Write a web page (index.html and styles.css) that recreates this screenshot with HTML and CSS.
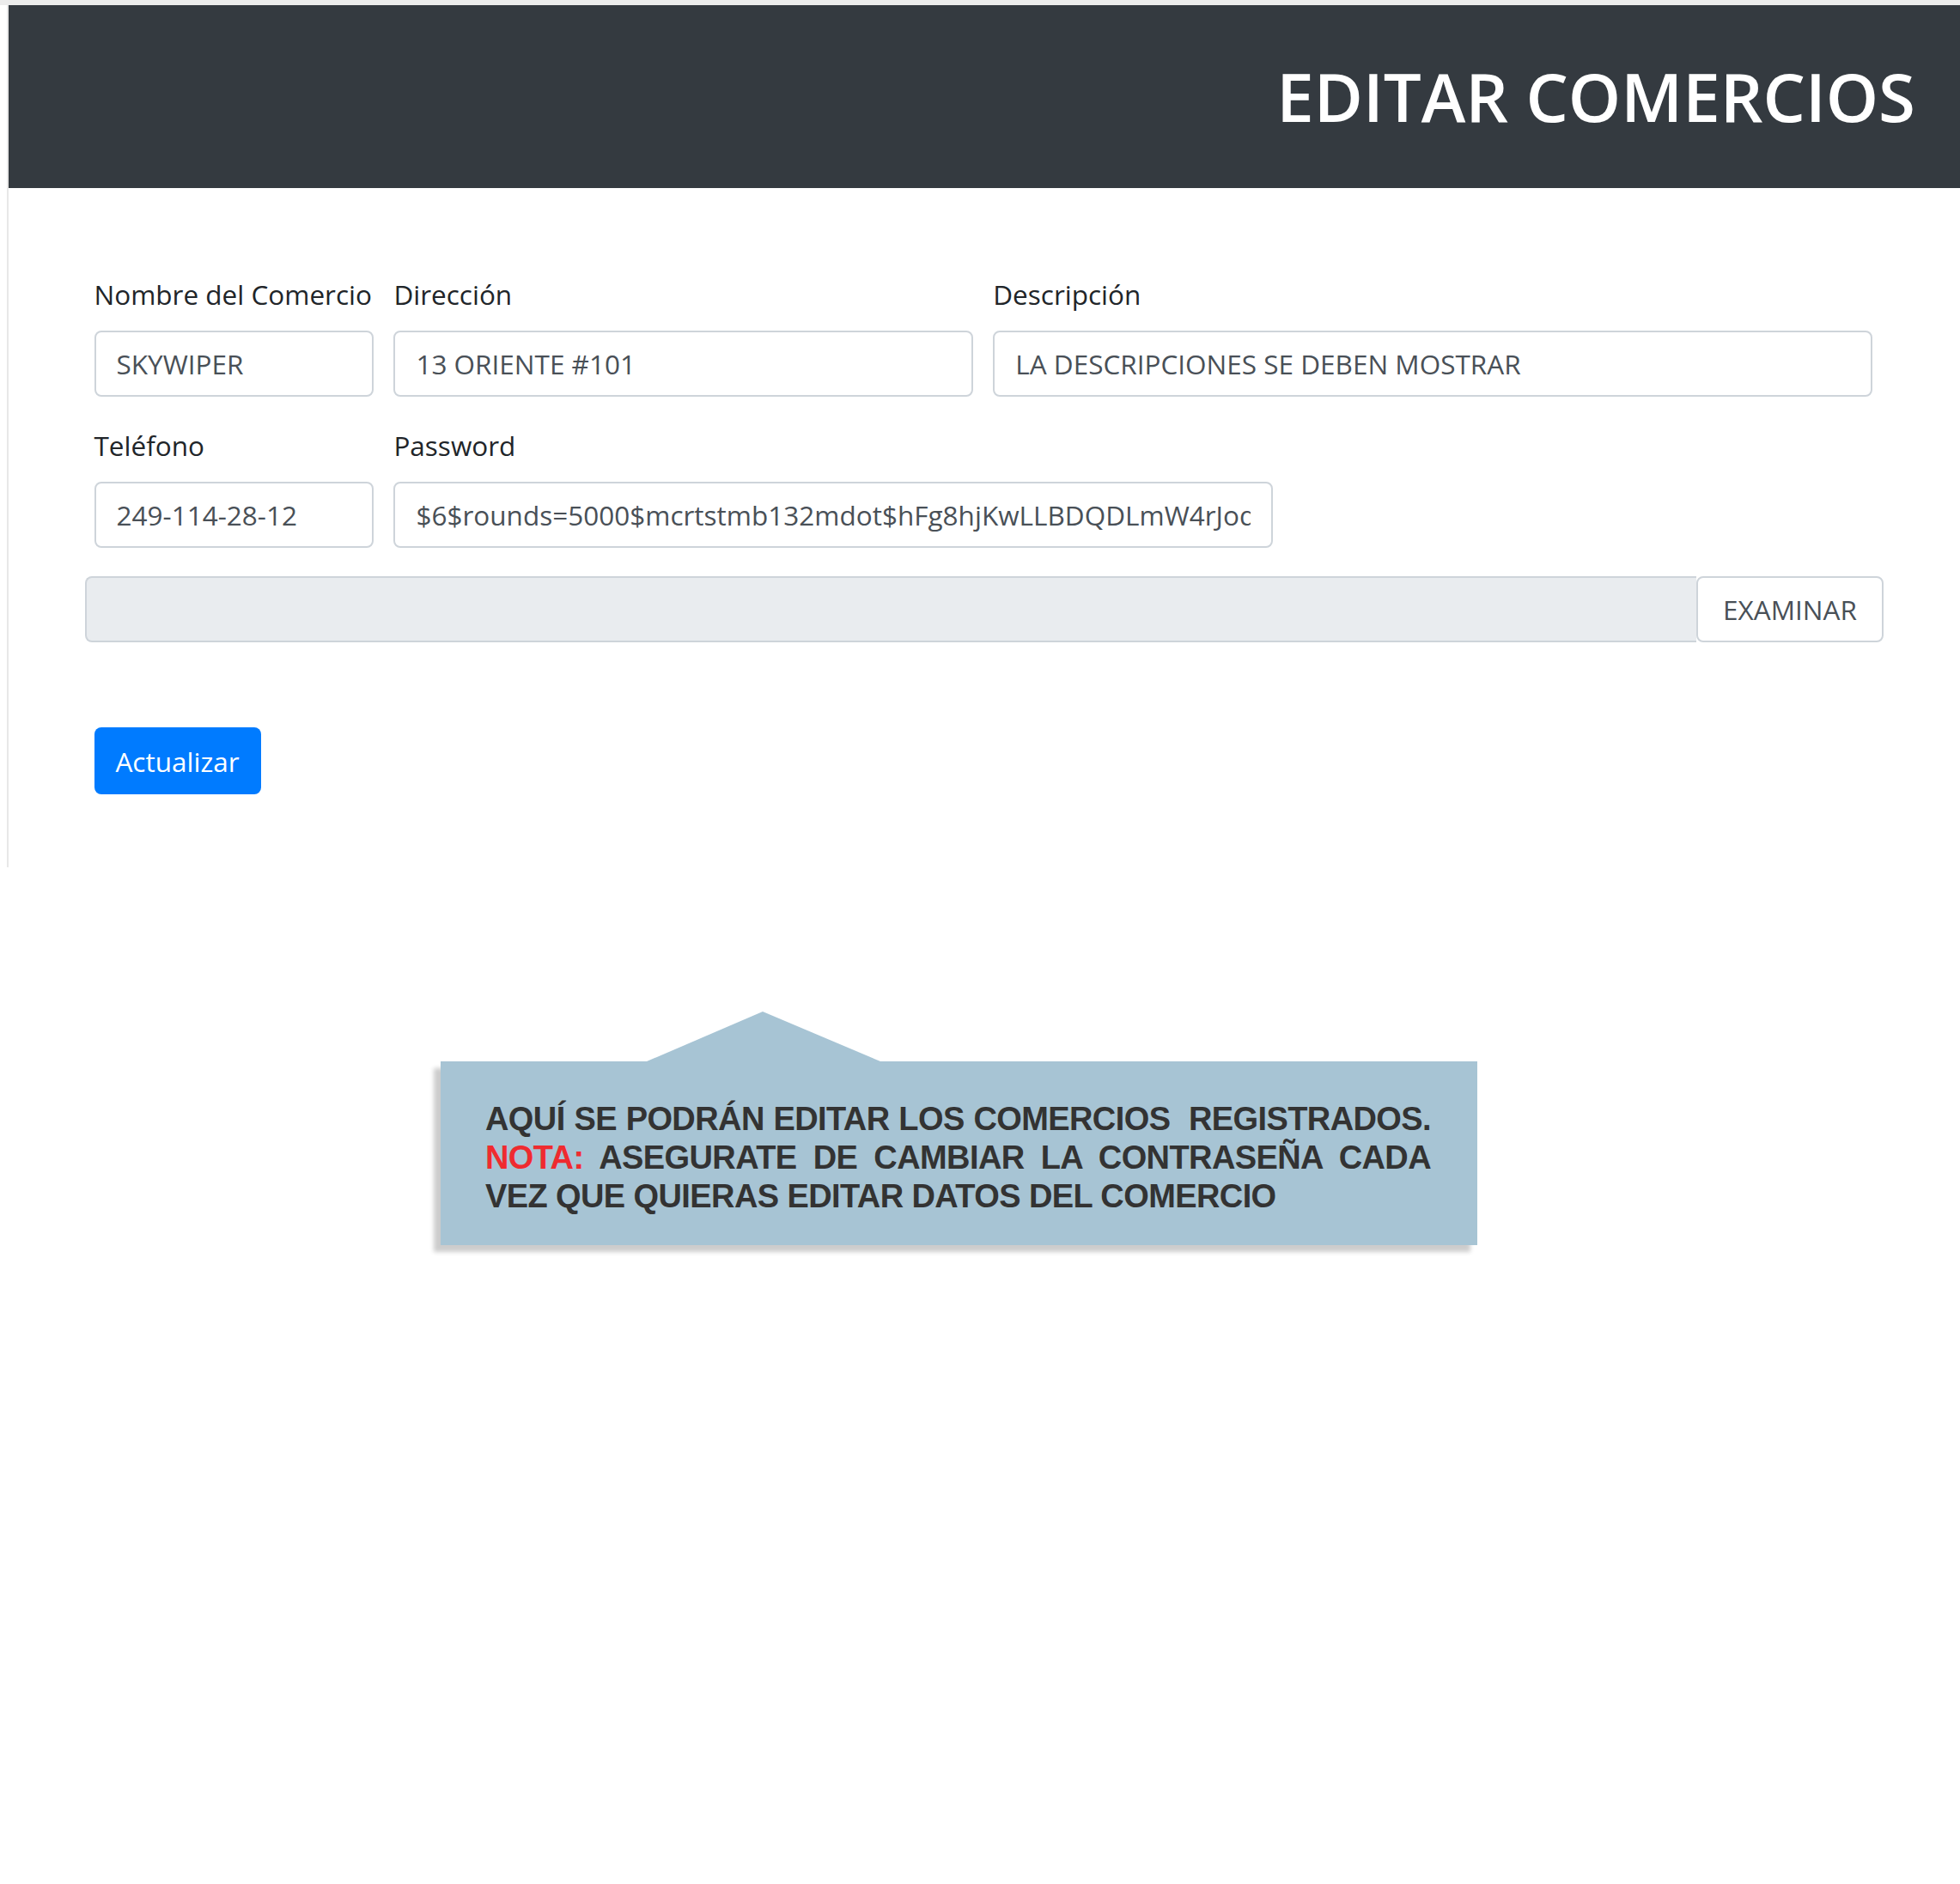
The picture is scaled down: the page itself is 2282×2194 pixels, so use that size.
FILE: index.html
```html
<!DOCTYPE html>
<html lang="es">
<head>
<meta charset="utf-8">
<title>Editar Comercios</title>
<link rel="stylesheet" href="styles.css">
</head>
<body>
<div class="topline"></div>
<div class="frame">
  <header class="hero"><h1>EDITAR COMERCIOS</h1></header>
  <form class="form">
    <div class="grid">
      <div class="field span2">
        <label class="label">Nombre del Comercio</label>
        <input class="control" type="text" value="SKYWIPER">
      </div>
      <div class="field span4">
        <label class="label">Dirección</label>
        <input class="control" type="text" value="13 ORIENTE #101">
      </div>
      <div class="field span6">
        <label class="label">Descripción</label>
        <input class="control" type="text" value="LA DESCRIPCIONES SE DEBEN MOSTRAR">
      </div>
      <div class="field span2">
        <label class="label">Teléfono</label>
        <input class="control" type="text" value="249-114-28-12">
      </div>
      <div class="field span6">
        <label class="label">Password</label>
        <input class="control" type="text" value="$6$rounds=5000$mcrtstmb132mdot$hFg8hjKwLLBDQDLmW4rJod/x9Qk2">
      </div>
    </div>
    <div class="file">
      <div class="file-track"></div>
      <div class="file-btn">EXAMINAR</div>
    </div>
    <button class="btn" type="button">Actualizar</button>
  </form>
</div>
<div class="callout-wrap">
  <div class="callout">
    <div class="line j">AQUÍ SE PODRÁN EDITAR LOS COMERCIOS &nbsp;REGISTRADOS.</div>
    <div class="line j"><span class="nota">NOTA:</span> ASEGURATE DE CAMBIAR LA CONTRASEÑA CADA</div>
    <div class="line">VEZ QUE QUIERAS EDITAR DATOS DEL COMERCIO</div>
  </div>
</div>
</body>
</html>
```
FILE: styles.css
```css
body {
  margin: 0;
  font-family: "Open Sans", "Noto Sans", sans-serif;
  color: #212529;
  background: #fff;
}

.topline {
  height: 6px;
  background: #ececec;
}

.frame {
  margin-left: 8px;
  border-left: 2px solid #e8e8e8;
}

.hero {
  height: 213px;
  background: #343a40;
  display: flex;
  align-items: center;
  justify-content: flex-end;
  padding-right: 52px;
}

.hero h1 {
  margin: 0;
  font-size: 78px;
  font-weight: 600;
  line-height: 1.2;
  color: #fff;
}

.form {
  padding: 100px 102px 85px 99.5px;
}

.grid {
  display: grid;
  grid-template-columns: repeat(12, 1fr);
  column-gap: 23px;
}

.field {
  margin-bottom: 33px;
}

.span2 { grid-column: span 2; }
.span4 { grid-column: span 4; }
.span6 { grid-column: span 6; }

.label {
  display: block;
  font-size: 31.5px;
  line-height: 48px;
  margin-bottom: 18px;
  color: #212529;
  white-space: nowrap;
}

.control {
  display: block;
  width: 100%;
  box-sizing: border-box;
  height: 77px;
  padding: 0 24px;
  font-family: inherit;
  font-size: 31.5px;
  color: #495057;
  background: #fff;
  border: 2px solid #ced4da;
  border-radius: 8px;
  outline: none;
}

.file {
  display: flex;
  height: 77px;
  margin: 0 -13px 0 -10.5px;
}

.file-track {
  flex: 1;
  background: #e9ecef;
  border: 2px solid #ced4da;
  border-right: none;
  border-radius: 8px 0 0 8px;
}

.file-btn {
  width: 218px;
  box-sizing: border-box;
  border: 2px solid #ced4da;
  border-radius: 8px;
  background: #fff;
  display: flex;
  align-items: center;
  justify-content: center;
  font-size: 31.5px;
  color: #495057;
}

.btn {
  display: block;
  margin-top: 99px;
  width: 194px;
  height: 78px;
  padding: 0;
  border: none;
  border-radius: 8px;
  background: #007bff;
  color: #fff;
  font-family: inherit;
  font-size: 31.5px;
}

.callout-wrap {
  padding-top: 226px;
  padding-bottom: 40px;
}

.callout {
  position: relative;
  margin-left: 513px;
  width: 1207px;
  height: 214px;
  box-sizing: border-box;
  padding: 45px 54px 34px 52px;
  background: #a7c4d4;
  box-shadow: -8px 8px 5px rgba(0, 0, 0, 0.2);
  font-family: "Liberation Sans", Arial, sans-serif;
  font-weight: bold;
  font-size: 38px;
  line-height: 45px;
  letter-spacing: -0.6px;
  color: #333;
}

.callout::before {
  content: "";
  position: absolute;
  left: 240px;
  top: -58px;
  width: 272px;
  height: 58px;
  background: #a7c4d4;
  clip-path: polygon(0 100%, 135px 0, 100% 100%);
}

.line {
  white-space: nowrap;
}

.j {
  text-align: justify;
  text-align-last: justify;
  white-space: normal;
}

.nota {
  color: #ef2b2f;
}
```
